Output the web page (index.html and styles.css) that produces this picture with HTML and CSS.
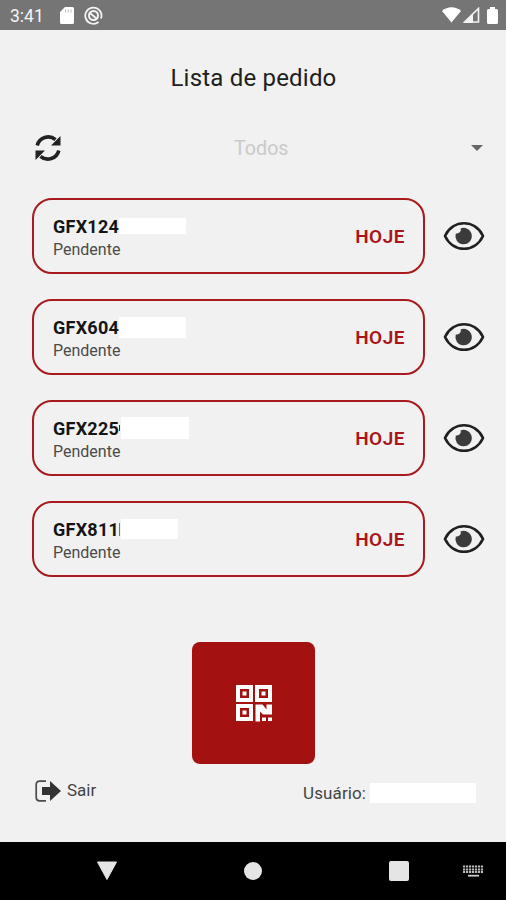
FILE: index.html
```html
<!DOCTYPE html>
<html lang="pt-BR">
<head>
  <meta charset="UTF-8" />
  <meta name="viewport" content="width=device-width, initial-scale=1.0" />
  <title>Lista de pedido</title>
  <link rel="stylesheet" href="styles.css">
</head>
<body>
  <svg class="sprite" xmlns="http://www.w3.org/2000/svg">
    <symbol id="eye" viewBox="0 0 42 30">
      <path d="M2 15C10 -2 32 -2 40 15C32 32 10 32 2 15Z" fill="none" stroke="#202020" stroke-width="2.7" stroke-linejoin="round"/>
      <path d="M17.500 7.500C18.500 9.500 17 12.700 12.800 12.600A8.200 8.200 0 1 0 17.500 7.500Z" fill="#3b3b3b"/>
    </symbol>
  </svg>

  <header class="status-bar">
    <span class="clock">3:41</span>
    <svg class="sd" width="14" height="17" viewBox="0 0 14 17"><path d="M5 0h7.500A1.500 1.500 0 0 1 14 1.500v14a1.500 1.500 0 0 1-1.500 1.500h-11A1.500 1.500 0 0 1 0 15.500V5z" fill="#fff"/><path d="M5.500 2.500v3M8.200 2.500v3M11 2.500v3" stroke="#bbb" stroke-width="1"/></svg>
    <svg class="sync" width="19" height="19" viewBox="0 0 19 19" fill="none" stroke="#f4f4f4"><path d="M14.500 16A8.100 8.100 0 1 1 17 12.500" stroke-width="1.800"/><circle cx="9.500" cy="9.500" r="4.500" stroke-width="2"/><path d="M6 7l7 6" stroke-width="1.800"/></svg>
    <svg class="wifi" width="19" height="16" viewBox="0 0 19 16"><path d="M0 4C5-1 14-1 19 4L9.500 15.500z" fill="#fff"/></svg>
    <svg class="signal" width="17" height="16" viewBox="0 0 17 16"><path d="M1.500 15L15.500 1.500V15z" fill="none" stroke="#f4f4f4" stroke-width="1.600"/><path d="M10 7v9H1z" fill="#f4f4f4"/></svg>
    <svg class="battery" width="11" height="17" viewBox="0 0 11 17"><path d="M3 0h5v2h1.500Q11 2 11 3.500v12Q11 17 9.500 17h-8Q0 17 0 15.500v-12Q0 2 1.500 2H3z" fill="#fff"/></svg>
  </header>

  <main>
    <h1>Lista de pedido</h1>

    <div class="filter">
      <svg class="refresh" width="26" height="26" viewBox="0 0 26 26"><path d="M2.200 10.500A11.200 11.200 0 0 1 20.500 4.700M23.800 15.500A11.200 11.200 0 0 1 5.500 21.300" fill="none" stroke="#222" stroke-width="3.600"/><path d="M25.500 1v9.500H16zM.5 25v-9.500H10z" fill="#222"/></svg>
      <span class="selected">Todos</span>
      <svg class="caret" width="12" height="6" viewBox="0 0 12 6"><path d="M0 0h12L6 6z" fill="#666"/></svg>
    </div>

    <div class="orders">
      <div class="order">
        <div class="card">
          <div>
            <div class="code">GFX124<span class="mask first"></span></div>
            <div class="state">Pendente</div>
          </div>
          <span class="day">HOJE</span>
        </div>
        <svg class="eye"><use href="#eye"/></svg>
      </div>
      <div class="order">
        <div class="card">
          <div>
            <div class="code">GFX604<span class="mask"></span></div>
            <div class="state">Pendente</div>
          </div>
          <span class="day">HOJE</span>
        </div>
        <svg class="eye"><use href="#eye"/></svg>
      </div>
      <div class="order">
        <div class="card">
          <div>
            <div class="code">GFX225<span class="tick short"></span><span class="mask third"></span></div>
            <div class="state">Pendente</div>
          </div>
          <span class="day">HOJE</span>
        </div>
        <svg class="eye"><use href="#eye"/></svg>
      </div>
      <div class="order">
        <div class="card">
          <div>
            <div class="code">GFX811<span class="tick"></span><span class="mask fourth"></span></div>
            <div class="state">Pendente</div>
          </div>
          <span class="day">HOJE</span>
        </div>
        <svg class="eye"><use href="#eye"/></svg>
      </div>
    </div>

    <div class="scan">
      <svg width="36" height="37" viewBox="0 0 36 37">
        <path fill="#fff" fill-rule="evenodd" d="M0 0h17v17H0zM4 4v9h9V4zM19 0h17v17H19zM23 4v9h9V4zM0 19h17v17H0zM4 23v9h9v-9z"/>
        <path fill="#fff" d="M6.500 6.500h4v4h-4zM25.500 6.500h4v4h-4zM6.500 25.500h4v4h-4zM19.500 19.500h7l4 5v-5H36v10h-9l-3-3v10h-4.500zM26 32.500h4v3.500h-4zM32 32.500h4v3.500h-4z"/>
      </svg>
    </div>

    <footer>
      <svg class="exit" width="26" height="22" viewBox="0 0 26 22"><path d="M11 1.200H4.500Q1.200 1.200 1.200 4.500v13Q1.200 20.800 4.500 20.800H11" fill="none" stroke="#4b4b4b" stroke-width="1.700"/><path d="M7 7h8V1l11 10-11 10v-6H7z" fill="#333"/></svg>
      <span class="leave">Sair</span>
      <span class="user">Usuário:</span>
      <span class="user-mask"></span>
    </footer>
  </main>

  <nav>
    <svg class="back" width="22" height="20" viewBox="0 0 22 20"><path d="M1.500 1h19L11 18.500z" fill="#e5e5e5" stroke="#e5e5e5" stroke-linejoin="round"/></svg>
    <span class="home"></span>
    <span class="recent"></span>
    <svg class="keyboard" width="20" height="12" viewBox="0 0 20 12"><path d="M0 1.500h20M0 4.500h20M0 7h20" stroke="#bbb" stroke-width="1.800" stroke-dasharray="2.200 .8"/><path d="M5 10.700h11" stroke="#ccc" stroke-width="1.800"/></svg>
  </nav>
</body>
</html>
```
FILE: styles.css
```css
* {
  box-sizing: border-box;
}

body {
  margin: 0;
  height: 900px;
  display: flex;
  flex-direction: column;
  overflow: hidden;
  font-family: Roboto, sans-serif;
  background: #f1f1f1;
  color: #202020;
}

svg {
  display: block;
  flex: none;
}

.sprite {
  display: none;
}

.status-bar {
  height: 30px;
  padding: 0 8px 0 10px;
  display: flex;
  align-items: center;
  background: #757575;
  color: #f4f4f4;
}

.clock {
  width: 50px;
  font-size: 17.5px;
  line-height: 30px;
  padding-top: 1px;
}

.sync {
  margin-left: 10px;
}

.wifi {
  margin-left: auto;
}

.signal {
  margin-left: 2px;
}

.battery {
  margin-left: 7px;
}

main {
  flex: 1;
}

h1 {
  margin: 33px 0 0 1px;
  font-size: 24px;
  font-weight: 400;
  line-height: 30px;
  text-align: center;
  letter-spacing: 0.2px;
}

.filter {
  height: 40px;
  margin-top: 35px;
  padding: 0 23px 0 35px;
  display: flex;
  align-items: center;
}

.selected {
  flex: 1;
  padding: 1px 0 0 173px;
  font-size: 19.7px;
  color: #cacaca;
}

.orders {
  display: flex;
  flex-direction: column;
  gap: 25px;
  padding: 30px 21px 0 32px;
}

.order {
  display: flex;
  align-items: center;
  justify-content: space-between;
}

.card {
  width: 393px;
  height: 76px;
  padding: 0 18px 0 19px;
  border: 2px solid #a71b1e;
  border-radius: 20px;
  display: flex;
  align-items: center;
  justify-content: space-between;
}

.code {
  display: flex;
  align-items: center;
  height: 22px;
  margin-top: 5px;
  font-size: 18px;
  font-weight: 700;
  letter-spacing: 0.25px;
  color: #151515;
}

.state {
  font-size: 16px;
  line-height: 25px;
  color: #4b4b4b;
}

.day {
  padding-top: 1px;
  font-size: 19px;
  font-weight: 600;
  letter-spacing: 0.5px;
  color: #a91518;
}

.mask {
  width: 67px;
  height: 21px;
  background: #fff;
}

.first {
  height: 16px;
}

.third {
  width: 68px;
  height: 22px;
}

.fourth {
  width: 57px;
  height: 20px;
}

.tick {
  width: 1px;
  height: 13px;
  margin: 0 1px 0 0;
  background: #777;
}

.short {
  height: 6px;
  background: #333;
}

.eye {
  width: 42px;
  height: 30px;
}

.scan {
  width: 123px;
  height: 122px;
  margin: 65px 0 0 192px;
  border-radius: 8px;
  background: #a31111;
  display: flex;
  align-items: center;
  justify-content: center;
}

footer {
  height: 54px;
  padding: 0 30px 0 35px;
  display: flex;
  align-items: center;
  color: #444;
}

.leave {
  margin: -3px 0 0 6px;
  font-size: 17px;
}

.user {
  margin: 3px 4px 0 auto;
  font-size: 17px;
  letter-spacing: 0.1px;
}

.user-mask {
  width: 106px;
  height: 20px;
  margin-top: 4px;
  background: #fff;
}

nav {
  height: 58px;
  padding: 0 23px 0 96px;
  display: flex;
  align-items: center;
  background: #000;
}

.home {
  width: 18px;
  height: 18px;
  margin-left: 126px;
  border-radius: 50%;
  background: #e5e5e5;
}

.recent {
  width: 20px;
  height: 20px;
  margin-left: 127px;
  border-radius: 2px;
  background: #e5e5e5;
}

.keyboard {
  margin-left: auto;
}
```
